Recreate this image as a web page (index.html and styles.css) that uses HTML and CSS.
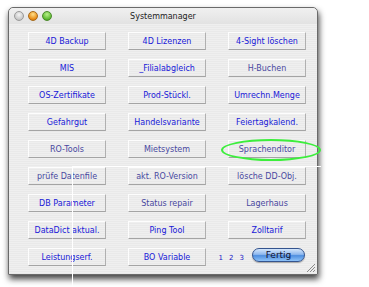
FILE: index.html
```html
<!DOCTYPE html>
<html lang="de">
  <head>
    <meta charset="UTF-8" />
    <meta name="viewport" content="width=device-width, initial-scale=1.0" />
    <title>Systemmanager</title>
    <link rel="stylesheet" href="styles.css">
  </head>
  <body>
    <div class="window">
      <div class="titlebar">
        <div class="lights">
          <span class="light close"></span>
          <span class="light min"></span>
          <span class="light zoom"></span>
        </div>
        <div class="title">Systemmanager</div>
      </div>

      <div class="grid">
        <button class="btn">4D Backup</button>
        <button class="btn">4D Lizenzen</button>
        <button class="btn">4-Sight löschen</button>

        <button class="btn">MIS</button>
        <button class="btn">_Filialabgleich</button>
        <button class="btn dim">H-Buchen</button>

        <button class="btn">OS-Zertifikate</button>
        <button class="btn">Prod-Stückl.</button>
        <button class="btn">Umrechn.Menge</button>

        <button class="btn">Gefahrgut</button>
        <button class="btn">Handelsvariante</button>
        <button class="btn">Feiertagkalend.</button>

        <button class="btn dim">RO-Tools</button>
        <button class="btn dim">Mietsystem</button>
        <button class="btn dim">Sprachenditor</button>

        <button class="btn dim">prüfe Datenfile</button>
        <button class="btn dim">akt. RO-Version</button>
        <button class="btn dim">lösche DD-Obj.</button>

        <button class="btn">DB Parameter</button>
        <button class="btn dim">Status repair</button>
        <button class="btn dim">Lagerhaus</button>

        <button class="btn">DataDict aktual.</button>
        <button class="btn">Ping Tool</button>
        <button class="btn">Zolltarif</button>

        <button class="btn">Leistungserf.</button>
        <button class="btn">BO Variable</button>
        <div class="footer-cell">
          <div class="pages">
            <span>1</span>
            <span>2</span>
            <span>3</span>
          </div>
          <button class="aqua">Fertig</button>
        </div>
      </div>

      <div class="grip"></div>
    </div>

    <!-- annotation marks over the screenshot -->
    <div class="mark-ellipse"></div>
    <div class="mark-hline"></div>
    <div class="mark-vline"></div>
  </body>
</html>
```

FILE: styles.css
```css
body {
  margin: 0;
  padding: 0;
  background-color: #ffffff;
  font-family: "DejaVu Sans", Verdana, sans-serif;
  font-size: 8px;
  width: 369px;
  height: 287px;
  overflow: hidden;
  position: relative;
}

.window {
  position: relative;
  margin: 7px 0 0 8px;
  width: 310px;
  height: 268px;
  border: 1px solid #6a6a6a;
  border-radius: 5px 5px 0 0;
  background: repeating-linear-gradient(
    to bottom,
    #efefef 0,
    #efefef 1px,
    #e9e9e9 1px,
    #e9e9e9 2px
  );
  box-shadow: 1px 4px 6px rgba(0, 0, 0, 0.75);
  box-sizing: border-box;
}

.titlebar {
  height: 16px;
  display: flex;
  align-items: center;
  position: relative;
  border-radius: 5px 5px 0 0;
  background: linear-gradient(to bottom, #f0f0f0, #e2e2e2);
}

.lights {
  display: flex;
  gap: 4px;
  padding-left: 5px;
}

.light {
  width: 10px;
  height: 10px;
  border-radius: 50%;
  box-sizing: border-box;
}

.close {
  background: radial-gradient(circle at 50% 35%, #f4f4f4, #b4b4b4);
  border: 1px solid #9a9a9a;
}

.min {
  background: radial-gradient(circle at 50% 30%, #ffe08a, #e88a14 70%, #b65c00);
  border: 1px solid #a86a1a;
}

.zoom {
  background: radial-gradient(circle at 50% 30%, #b8f08a, #5cb830 70%, #2f7a14);
  border: 1px solid #4a8a2a;
}

.title {
  position: absolute;
  left: 0;
  right: 0;
  text-align: center;
  color: #222;
  font-size: 8px;
}

.grid {
  display: grid;
  grid-template-columns: repeat(3, 78px);
  grid-auto-rows: 18px;
  column-gap: 22px;
  row-gap: 9px;
  padding: 8px 0 0 19px;
}

.btn {
  font-family: inherit;
  font-size: 8px;
  color: #1818d8;
  background: transparent;
  border: none;
  border-top: 1px solid #fdfdfd;
  border-left: 1px solid #fdfdfd;
  border-bottom: 1px solid #a4a4a4;
  border-right: 1px solid #b0b0b0;
  padding: 0;
  margin: 0;
  white-space: nowrap;
  overflow: visible;
}

.btn.dim {
  color: #4848a0;
}

.footer-cell {
  display: flex;
  align-items: flex-start;
  justify-content: flex-end;
  gap: 8px;
  margin-left: -12px;
}

.pages {
  display: flex;
  gap: 6px;
  color: #2020c8;
  font-size: 7px;
  padding-top: 6px;
}

.aqua {
  width: 53px;
  height: 14px;
  padding: 0;
  margin-right: 1px;
  font-family: inherit;
  font-size: 9px;
  color: #101030;
  border: 1px solid #34548e;
  border-radius: 7px;
  background: linear-gradient(
    to bottom,
    #d4e6fb 0%,
    #8fb8ee 45%,
    #4f8fe0 55%,
    #8ec2f8 100%
  );
  box-shadow: 0 1px 1px rgba(0, 0, 0, 0.3);
}

.grip {
  position: absolute;
  right: 2px;
  bottom: 2px;
  width: 8px;
  height: 8px;
  background: linear-gradient(
    135deg,
    transparent 0 45%,
    #8a8a8a 45% 52%,
    transparent 52% 64%,
    #8a8a8a 64% 71%,
    transparent 71% 82%,
    #8a8a8a 82% 89%,
    transparent 89%
  );
}

.mark-ellipse {
  position: absolute;
  left: 221px;
  top: 139px;
  width: 100px;
  height: 22px;
  border: 2px solid #3cee3c;
  border-radius: 50%;
  box-sizing: border-box;
}

.mark-hline {
  position: absolute;
  left: 72px;
  top: 166px;
  width: 249px;
  height: 1px;
  background-color: #ffffff;
}

.mark-vline {
  position: absolute;
  left: 72px;
  top: 166px;
  width: 1px;
  height: 121px;
  background-color: #ffffff;
}
```
